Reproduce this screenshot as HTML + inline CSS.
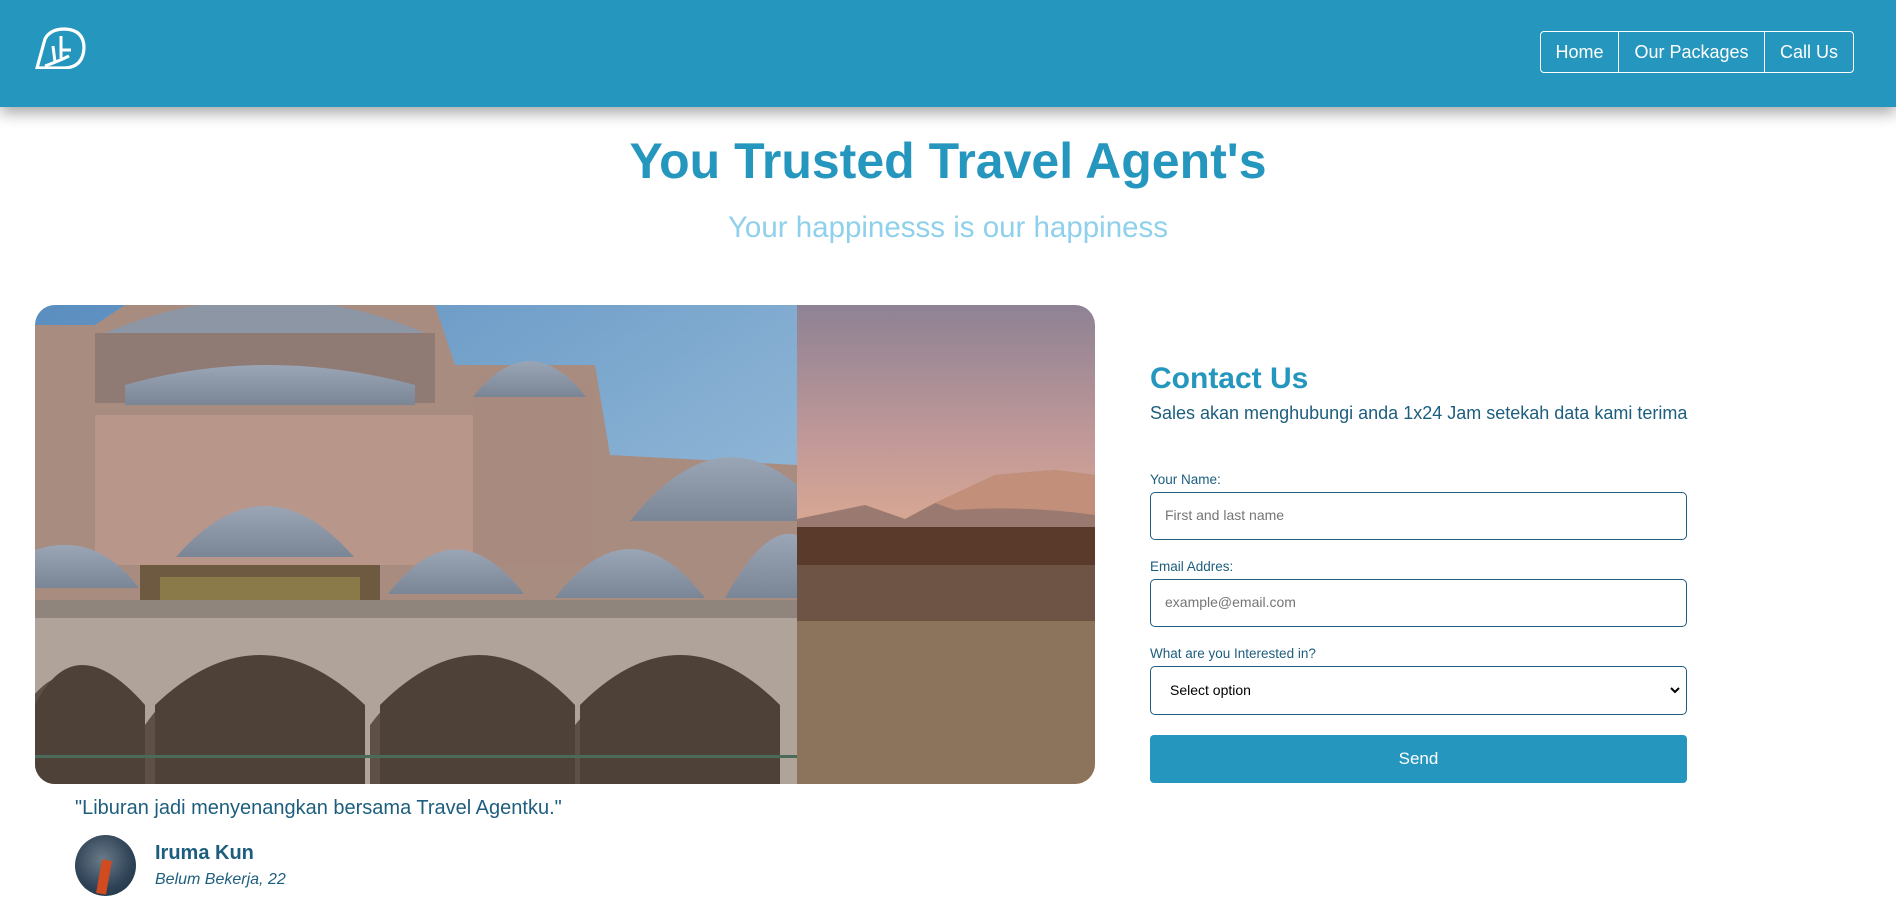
<!DOCTYPE html>
<html><head><meta charset="utf-8"><style>
*{box-sizing:border-box;margin:0;padding:0}
body{width:1896px;height:905px;overflow:hidden;background:#fff;font-family:"Liberation Sans",Arial,sans-serif;position:relative}
.hdr{position:absolute;left:0;top:0;width:1896px;height:107px;background:#2596be;box-shadow:0 6px 14px rgba(0,0,0,.35)}
.nav{position:absolute;left:1540px;top:31px;height:42px;border:1px solid #fff;border-radius:4px;display:flex}
.nav div{color:#fff;font-size:18px;line-height:40px;text-align:center}
.abs{position:absolute}
h1{position:absolute;left:0;width:1896px;text-align:center;top:132px;font-size:50px;color:#2596be;font-weight:bold}
.sub{position:absolute;left:0;width:1896px;text-align:center;top:211px;font-size:29.5px;color:#8fd0ec}
.img{position:absolute;left:35px;top:305px;width:1060px;height:479px;border-radius:20px;overflow:hidden}
.lbl{position:absolute;left:1150px;font-size:13.5px;color:#1d5e7e}
.inp{position:absolute;left:1150px;width:537px;border:1.5px solid #1d5e7e;border-radius:5px;font-size:14px;color:#757575;padding-left:14px;background:#fff}
</style></head><body>
<div class="hdr">
<svg class="abs" style="left:35px;top:27px" width="52" height="42" viewBox="0 0 52 42">
<path d="M2 41 L10 12 Q15 2 30 2 Q49 3 49 21 Q48 40 30 41 Z" fill="none" stroke="#fff" stroke-width="3.2"/>
<path d="M10 39 Q24 34 34 29 M20 35 L18 19 M26 31 L26 9 M27 23 L36 23" fill="none" stroke="#fff" stroke-width="3"/>
</svg>
<div class="nav"><div style="width:78px;border-right:1px solid #fff">Home</div><div style="width:146px;border-right:1px solid #fff">Our Packages</div><div style="width:88px">Call Us</div></div>
</div>
<h1>You Trusted Travel Agent's</h1>
<div class="sub">Your happinesss is our happiness</div>
<div class="img">
<svg width="1060" height="479" viewBox="0 0 1060 479">
<defs>
<linearGradient id="sky" x1="0" y1="0" x2="1" y2="1"><stop offset="0" stop-color="#5a8ec0"/><stop offset="1" stop-color="#a8c8e0"/></linearGradient>
<linearGradient id="sun" x1="0" y1="0" x2="0" y2="1"><stop offset="0" stop-color="#8e8294"/><stop offset=".3" stop-color="#c49a98"/><stop offset=".6" stop-color="#eab48e"/><stop offset="1" stop-color="#f2b27a"/></linearGradient>
<linearGradient id="dome" x1="0" y1="0" x2="0" y2="1"><stop offset="0" stop-color="#9aa6b6"/><stop offset="1" stop-color="#7a8696"/></linearGradient>
</defs>
<rect width="762" height="479" fill="url(#sky)"/>
<path d="M0 20 L60 20 L90 0 L400 0 L420 60 L560 60 L575 150 L762 160 L762 479 L0 479Z" fill="#a98c80"/>
<path d="M70 28 Q230 -40 390 28Z" fill="#8c96a4"/>
<rect x="60" y="28" width="340" height="70" fill="#8f7a74"/>
<rect x="60" y="110" width="380" height="150" fill="#b8968a"/>
<rect x="438" y="80" width="120" height="180" fill="#a88a7e"/>
<path d="M141 252 Q230 150 319 252Z" fill="url(#dome)"/>
<path d="M353 289 Q421 200 489 289Z" fill="url(#dome)"/>
<path d="M520 293 Q595 195 670 293Z" fill="url(#dome)"/>
<path d="M595 216 Q680 110 762 180 L762 216Z" fill="url(#dome)"/>
<path d="M438 92 Q495 20 551 92Z" fill="url(#dome)"/>
<path d="M0 283 L0 245 Q60 225 104 283Z" fill="url(#dome)"/>
<path d="M690 293 Q730 220 762 230 L762 293Z" fill="url(#dome)"/>
<path d="M90 80 Q230 40 380 80 L380 100 L90 100Z" fill="url(#dome)"/>
<rect x="105" y="260" width="240" height="50" fill="#6e5a40"/>
<rect x="125" y="272" width="200" height="26" fill="#8a7a4a"/>
<rect x="0" y="295" width="762" height="18" fill="#8f857c"/>
<rect x="0" y="313" width="762" height="166" fill="#b0a49a"/>
<path d="M-20 479 L-20 420 Q30 320 100 420 L100 479Z M110 479 L110 420 Q180 320 250 420 L250 479Z M335 479 L335 420 Q410 320 480 420 L480 479Z M540 479 L540 420 Q620 320 690 420 L690 479Z" fill="#5e5046"/>
<path d="M120 479 L120 400 Q225 300 330 400 L330 479Z M345 479 L345 400 Q445 300 540 400 L540 479Z M545 479 L545 400 Q645 300 745 400 L745 479Z M0 479 L0 400 Q40 320 110 400 L110 479Z" fill="#4e4238"/>
<rect x="0" y="450" width="762" height="3" fill="#4a6a5a"/>
<rect x="762" width="298" height="479" fill="url(#sun)"/>
<path d="M762 214 L830 200 L870 214 L900 198 L960 170 L1020 165 L1060 170 L1060 240 L762 240Z" fill="#9a7a70"/>
<path d="M900 198 L960 170 L1020 165 L1060 170 L1060 210 Q990 200 920 205Z" fill="#c2907a"/>
<rect x="762" y="222" width="298" height="40" fill="#5a3a2a"/>
<rect x="762" y="260" width="298" height="56" fill="#6e5444"/>
<rect x="762" y="316" width="298" height="163" fill="#8c735c"/>
</svg>
</div>
<div class="abs" style="left:75px;top:797px;font-size:20px;color:#1d5e7e">"Liburan jadi menyenangkan bersama Travel Agentku."</div>
<div class="abs" style="left:75px;top:835px;width:61px;height:61px;border-radius:50%;background:radial-gradient(circle at 45% 40%,#6a7a88,#2e4256 60%,#1e3244);overflow:hidden"><div style="position:absolute;left:24px;top:25px;width:10px;height:34px;background:#d24a20;transform:rotate(10deg)"></div></div>
<div class="abs" style="left:155px;top:842px;font-size:20px;font-weight:bold;color:#1d5e7e">Iruma Kun</div>
<div class="abs" style="left:155px;top:871px;font-size:16px;font-style:italic;color:#1d5e7e">Belum Bekerja, 22</div>
<div class="abs" style="left:1150px;top:362px;font-size:30px;font-weight:bold;color:#2596be">Contact Us</div>
<div class="abs" style="left:1150px;top:403px;font-size:18px;color:#1d5e7e">Sales akan menghubungi anda 1x24 Jam setekah data kami terima</div>
<div class="lbl" style="top:472px">Your Name:</div>
<div class="inp" style="top:492px;height:48px;line-height:45px">First and last name</div>
<div class="lbl" style="top:559px">Email Addres:</div>
<div class="inp" style="top:579px;height:48px;line-height:45px">example@email.com</div>
<div class="lbl" style="top:646px">What are you Interested in?</div>
<div class="inp" style="top:666px;height:49px;line-height:46px;color:#000;padding-left:19px">Select option
<svg class="abs" style="right:6px;top:19px" width="10" height="8" viewBox="0 0 10 8"><path d="M1 2 L5 6 L9 2" fill="none" stroke="#000" stroke-width="2"/></svg></div>
<div class="abs" style="left:1150px;top:735px;width:537px;height:48px;background:#2596be;border-radius:4px;color:#fff;font-size:17px;text-align:center;line-height:48px">Send</div>
</body></html>
